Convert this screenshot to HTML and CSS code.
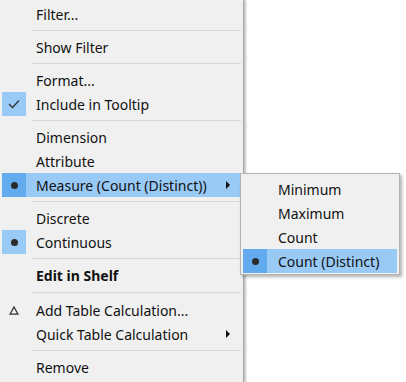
FILE: index.html
```html
<!DOCTYPE html>
<html lang="en">
<head>
    <meta charset="UTF-8">
    <title>Pill Menu</title>
    <link rel="stylesheet" href="styles.css">
</head>
<body>
    <div class="menu">
        <div class="item">Filter...</div>
        <div class="sep"></div>
        <div class="item">Show Filter</div>
        <div class="sep"></div>
        <div class="item">Format...</div>
        <div class="item">
            <span class="icon box">
                <svg width="12" height="10" viewBox="0 0 12 10"><path d="M1 5 L4.5 8.5 L11 1.5" fill="none" stroke="#333" stroke-width="1.3"/></svg>
            </span>Include in Tooltip
        </div>
        <div class="sep"></div>
        <div class="item">Dimension</div>
        <div class="item">Attribute</div>
        <div class="item active"><span class="icon"><span class="dot"></span></span>Measure (Count (Distinct))<span class="arrow"></span></div>
        <div class="sep"></div>
        <div class="item">Discrete</div>
        <div class="item"><span class="icon box"><span class="dot"></span></span>Continuous</div>
        <div class="sep"></div>
        <div class="item bold">Edit in Shelf</div>
        <div class="sep wide"></div>
        <div class="item">
            <span class="icon">
                <svg width="10" height="9" viewBox="0 0 10 9"><path d="M5 1 L9 8.2 L1 8.2 Z" fill="none" stroke="#333" stroke-width="1.3" stroke-linejoin="miter"/></svg>
            </span>Add Table Calculation...
        </div>
        <div class="item">Quick Table Calculation<span class="arrow"></span></div>
        <div class="sep"></div>
        <div class="item">Remove</div>

        <div class="submenu">
            <div class="item">Minimum</div>
            <div class="item">Maximum</div>
            <div class="item">Count</div>
            <div class="item active"><span class="icon"><span class="dot"></span></span>Count (Distinct)</div>
        </div>
    </div>
</body>
</html>
```

FILE: styles.css
```css
body {
    margin: 0;
    background-color: #fff;
    font-family: "Noto Sans", "Open Sans", sans-serif;
    font-size: 14px;
    color: #111;
}
.menu {
    position: relative;
    width: 244px;
    height: 382px;
    padding-top: 2px;
    box-sizing: border-box;
    background-color: #f0f0f0;
    border-right: 1px solid #a8a8a8;
    box-shadow: 2px 0 2px rgba(0, 0, 0, 0.25);
}
.item {
    position: relative;
    display: flex;
    align-items: center;
    height: 24px;
    margin: 0 2px;
    padding-left: 34px;
    white-space: nowrap;
}
.item.bold {
    font-weight: bold;
}
.icon {
    position: absolute;
    left: 0;
    top: 0;
    width: 24px;
    height: 24px;
    display: flex;
    align-items: center;
    justify-content: center;
}
.icon.box {
    background-color: #99c9f5;
}
.dot {
    width: 7px;
    height: 7px;
    border-radius: 50%;
    background-color: #2b2b2b;
}
.item.active {
    background-color: #99c9f5;
}
.item.active .icon {
    background-color: #62abef;
}
.arrow {
    position: absolute;
    left: 224px;
    top: 8px;
    width: 0;
    height: 0;
    border-top: 4px solid transparent;
    border-bottom: 4px solid transparent;
    border-left: 4px solid #111;
}
.sep {
    height: 1px;
    margin: 4px 2px 4px 32px;
    background-color: #d7d7d7;
}
.sep.wide {
    margin-top: 5px;
    margin-bottom: 5px;
}
.submenu {
    position: absolute;
    left: 240px;
    top: 173px;
    width: 160px;
    padding: 3px 0 1px;
    box-sizing: border-box;
    background-color: #f0f0f0;
    border: 1px solid #b4b4b4;
    box-shadow: 2px 2px 3px rgba(0, 0, 0, 0.3);
}
.submenu .item {
    padding-left: 35px;
}
```
